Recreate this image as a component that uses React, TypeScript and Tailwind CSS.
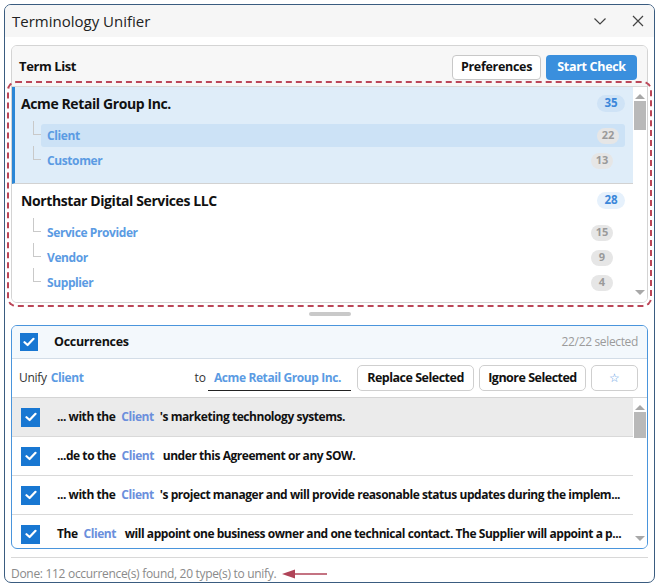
import React from "react";

type Term = { name: string; count: number; active?: boolean };
type Group = { name: string; count: number; selected?: boolean; terms: Term[] };

const groups: Group[] = [
  {
    name: "Acme Retail Group Inc.",
    count: 35,
    selected: true,
    terms: [
      { name: "Client", count: 22, active: true },
      { name: "Customer", count: 13 },
    ],
  },
  {
    name: "Northstar Digital Services LLC",
    count: 28,
    terms: [
      { name: "Service Provider", count: 15 },
      { name: "Vendor", count: 9 },
      { name: "Supplier", count: 4 },
    ],
  },
];

const rows = [
  { pre: "... with the", post: "'s marketing technology systems.", tight: true },
  { pre: "...de to the", post: "under this Agreement or any SOW." },
  { pre: "... with the", post: "'s project manager and will provide reasonable status updates during the implem...", tight: true },
  { pre: "The", post: "will appoint one business owner and one technical contact. The Supplier will appoint a p..." },
];

function Check({ size = "w-[19px] h-[19px]" }: { size?: string }) {
  return (
    <div className={`${size} bg-[#1877d2] flex items-center justify-center shrink-0`}>
      <svg width="12" height="10" viewBox="0 0 12 10">
        <polyline points="1.5,5.2 4.6,8 10.5,1.8" fill="none" stroke="white" strokeWidth="2.2" strokeLinecap="round" strokeLinejoin="round" />
      </svg>
    </div>
  );
}

function ScrollBar({ thumbH }: { thumbH: string }) {
  return (
    <div className="w-[14px] shrink-0 flex flex-col items-center bg-white">
      <svg width="12" height="8" viewBox="0 0 12 8" className="mt-[5px]">
        <polygon points="1,7 6,2 11,7" fill="#a8a8a8" />
      </svg>
      <div className={`${thumbH} mt-[1px] w-[12px] bg-[#b9b9b9]`} />
      <div className="flex-1" />
      <svg width="12" height="8" viewBox="0 0 12 8" className="mb-[5px]">
        <polygon points="1,1 6,6 11,1" fill="#a8a8a8" />
      </svg>
    </div>
  );
}

export default function App() {
  return (
    <div className="w-[659px] h-[587px] bg-white relative font-['Open_Sans',sans-serif] text-[#111]">
      <div className="absolute left-[4px] top-[4px] w-[651px] h-[579px] border border-[#3a5c80] rounded-[7px] overflow-hidden flex flex-col bg-white">
        {/* title bar */}
        <div className="h-[32px] bg-[#f6f6f6] flex items-center pl-[7px] pr-[10px] shrink-0">
          <span className="text-[15px] text-[#222]">Terminology Unifier</span>
          <div className="flex-1" />
          <svg width="14" height="14" viewBox="0 0 14 14" className="mr-[25px]">
            <polyline points="1.5,4.5 7,10 12.5,4.5" fill="none" stroke="#444" strokeWidth="1.2" />
          </svg>
          <svg width="12" height="12" viewBox="0 0 12 12">
            <path d="M1 1 L11 11 M11 1 L1 11" stroke="#444" strokeWidth="1.2" />
          </svg>
        </div>

        <div className="flex-1 flex flex-col px-[6px] pt-[8px]">
          {/* term list panel */}
          <div className="h-[258px] border border-[#d4d4d4] rounded-[6px] overflow-hidden flex flex-col shrink-0">
            <div className="h-[40px] bg-[#f7f7f7] flex items-center pl-[7px] pr-[10px] pt-[2px] shrink-0">
              <span className="text-[13px] font-bold tracking-[-0.4px]">Term List</span>
              <div className="flex-1" />
              <button className="h-[25px] w-[89px] border border-[#c8c8c8] rounded-[4px] bg-white text-[12.5px] font-bold tracking-[-0.3px] whitespace-nowrap">Preferences</button>
              <button className="h-[25px] w-[91px] ml-[5px] rounded-[4px] bg-[#3a8fdd] text-white text-[12.5px] font-bold tracking-[-0.3px] whitespace-nowrap">Start Check</button>
            </div>
            <div className="flex-1 flex border-t border-[#d8d8d8] bg-white">
              <div className="flex-1 flex flex-col">
                {groups.map((g) => (
                  <div
                    key={g.name}
                    className={`${g.selected ? "bg-[#dfedf9] border-l-[3px] border-[#2b86d6] pl-[6px] border-b border-b-[#d2d2d2] pb-[10px]" : "pl-[9px] pb-[6px]"} pr-[8px]`}
                  >
                    <div className="h-[32px] flex items-center">
                      <span className="text-[14px] font-bold tracking-[-0.4px]">{g.name}</span>
                      <div className="flex-1" />
                      <span
                        className={`${g.selected ? "bg-[#cfe3f6]" : "bg-[#e6f1fc]"} text-[#3b87da] text-[11.5px] font-bold rounded-full w-[28px] h-[17px] flex items-center justify-center`}
                      >
                        {g.count}
                      </span>
                    </div>
                    <div className="pt-[4px]">
                      {g.terms.map((t) => (
                        <div key={t.name} className="flex items-center h-[25px]">
                          <div className="w-[20px] h-full relative shrink-0">
                            <div className="absolute left-[12px] top-[-2px] h-[14px] w-[8px] border-l border-b border-[#c9c9c9]" />
                          </div>
                          <div
                            className={`${t.active ? "bg-[#cce2f6]" : ""} flex-1 flex items-center h-[23px] rounded-[3px] pl-[6px] pr-[6px]`}
                          >
                            <span className="text-[12px] font-bold tracking-[-0.4px] text-[#5b9be3]">{t.name}</span>
                            <div className="flex-1" />
                            <span className="bg-[#e6e6e6] text-[#9a9a9a] text-[11px] font-bold rounded-full w-[22px] h-[16px] flex items-center justify-center">
                              {t.count}
                            </span>
                          </div>
                          <div className={t.active ? "w-0" : "w-[6px]"} />
                        </div>
                      ))}
                    </div>
                  </div>
                ))}
              </div>
              <ScrollBar thumbH="h-[29px]" />
            </div>
          </div>

          {/* splitter */}
          <div className="h-[22px] flex items-center justify-center shrink-0">
            <div className="w-[42px] h-[4px] rounded-full bg-[#c9c9c9]" />
          </div>

          {/* occurrences panel */}
          <div className="h-[224px] border border-[#4a95dc] rounded-[6px] overflow-hidden flex flex-col shrink-0">
            <div className="h-[33px] bg-[#f3f8fc] border-b border-[#d3dde7] flex items-center pl-[8px] pr-[9px] shrink-0">
              <Check size="w-[18px] h-[18px]" />
              <span className="ml-[16px] text-[12.5px] font-bold tracking-[-0.3px]">Occurrences</span>
              <div className="flex-1" />
              <span className="text-[12px] text-[#9b9b9b] tracking-[-0.35px]">22/22 selected</span>
            </div>
            <div className="h-[39px] flex items-center pl-[7px] pr-[9px] border-b border-[#d4d4d4] shrink-0">
              <span className="text-[12px] text-[#333] tracking-[-0.3px]">Unify</span>
              <span className="ml-[4px] text-[12px] font-bold text-[#5b9be3] tracking-[-0.4px]">Client</span>
              <div className="w-[111px]" />
              <span className="text-[12px] text-[#333]">to</span>
              <div className="ml-[2px] w-[143px] h-[26px] border-b border-[#222] flex items-center pl-[6px]">
                <span className="text-[12px] font-bold text-[#5b9be3] tracking-[-0.4px] whitespace-nowrap">Acme Retail Group Inc.</span>
              </div>
              <div className="flex-1" />
              <button className="h-[26px] w-[117px] border border-[#cfcfcf] rounded-[5px] bg-white text-[12.5px] font-bold tracking-[-0.5px] whitespace-nowrap">Replace Selected</button>
              <button className="ml-[5px] h-[26px] w-[107px] border border-[#cfcfcf] rounded-[5px] bg-white text-[12.5px] font-bold tracking-[-0.5px] whitespace-nowrap">Ignore Selected</button>
              <button className="ml-[5px] h-[26px] w-[47px] border border-[#cfcfcf] rounded-[5px] bg-white text-[12px] text-[#5b9be3] flex items-center justify-center">☆</button>
            </div>
            <div className="flex-1 flex overflow-hidden">
              <div className="flex-1 flex flex-col min-w-0">
                {rows.map((r, i) => (
                  <div
                    key={i}
                    className={`${i === 0 ? "bg-[#ebebeb]" : ""} h-[39px] shrink-0 flex items-center pl-[9px] border-b border-[#d9d9d9]`}
                  >
                    <Check />
                    <span className="ml-[17px] text-[12px] font-bold tracking-[-0.45px] whitespace-nowrap">
                      {r.pre}
                      <span className="text-[#6b8fdc] mx-[6px]">Client</span>
                      {r.tight ? "" : " "}
                      {r.post}
                    </span>
                  </div>
                ))}
              </div>
              <ScrollBar thumbH="h-[26px]" />
            </div>
          </div>

          {/* status */}
          <div className="mt-[8px] border-t border-[#d8d8d8] h-[33px] flex items-center">
            <span className="text-[12px] text-[#8a8a8a] tracking-[-0.3px]">Done: 112 occurrence(s) found, 20 type(s) to unify.</span>
            <svg width="46" height="12" viewBox="0 0 46 12" className="ml-[6px]">
              <line x1="4" y1="6" x2="45" y2="6" stroke="#b04458" strokeWidth="1.6" />
              <polygon points="0,6 13,1.5 13,10.5" fill="#b04458" />
            </svg>
          </div>
        </div>
      </div>

      {/* annotation overlay */}
      <div className="absolute left-[7px] top-[81px] w-[645px] h-[226px] border-2 border-dashed border-[#bb4658] rounded-[9px] pointer-events-none" />
    </div>
  );
}
